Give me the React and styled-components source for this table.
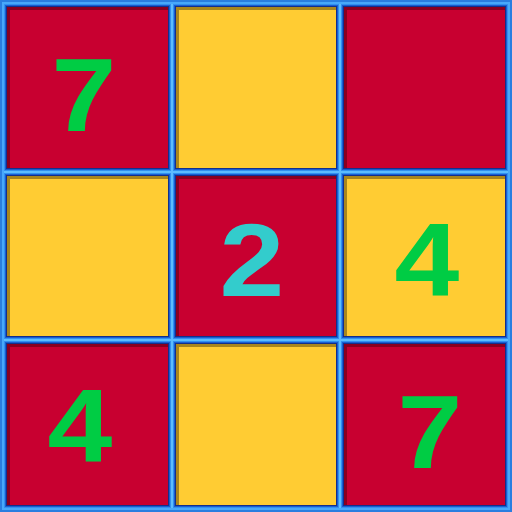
import React from 'react';
import styled, { createGlobalStyle } from 'styled-components';

const GlobalStyle = createGlobalStyle`
  html, body {
    margin: 0;
    padding: 0;
    background: #2a88e8;
  }
`;

const Board = styled.div`
  width: 512px;
  height: 512px;
  box-sizing: border-box;
  padding: 7px;
  display: grid;
  grid-template-columns: repeat(3, 1fr);
  grid-template-rows: repeat(3, 1fr);
  gap: 8px;
  background: #5cbcff;
  box-shadow: inset 0 0 0 2px #2a7ee0, inset 0 0 0 4px #48a8fa;
`;

const Cell = styled.div`
  background-color: ${({ red }) => (red ? '#c80030' : '#ffcc33')};
  display: flex;
  justify-content: center;
  align-items: center;
  box-shadow:
    inset 3px 3px 0 ${({ red }) => (red ? '#8a0020' : '#a8861e')},
    0 0 0 1px #12308c,
    0 0 0 2px #1a5cd0,
    0 0 0 3px #3090f0;
`;

const Digit = styled.span`
  display: inline-block;
  font-family: "Liberation Sans", Arial, sans-serif;
  font-weight: bold;
  font-size: 104px;
  line-height: 1;
  color: ${({ color }) => color};
  margin-left: ${({ dx }) => dx || 0}px;
  margin-top: ${({ dy }) => dy || 0}px;
  transform: scaleX(1.12);
`;

const cells = [
  { red: true, n: '7', color: '#00cc44', dx: -6, dy: 16 },
  { red: false },
  { red: true },
  { red: false },
  { red: true, n: '2', color: '#33cccc', dx: -8, dy: 8 },
  { red: false, n: '4', color: '#00cc44', dx: 4, dy: 8 },
  { red: true, n: '4', color: '#00cc44', dx: -14, dy: 2 },
  { red: false },
  { red: true, n: '7', color: '#00cc44', dx: 10, dy: 14 },
];

export default function App() {
  return (
    <>
      <GlobalStyle />
      <Board>
        {cells.map((c, i) => (
          <Cell key={i} red={c.red}>
            {c.n && (
              <Digit color={c.color} dx={c.dx} dy={c.dy}>
                {c.n}
              </Digit>
            )}
          </Cell>
        ))}
      </Board>
    </>
  );
}
